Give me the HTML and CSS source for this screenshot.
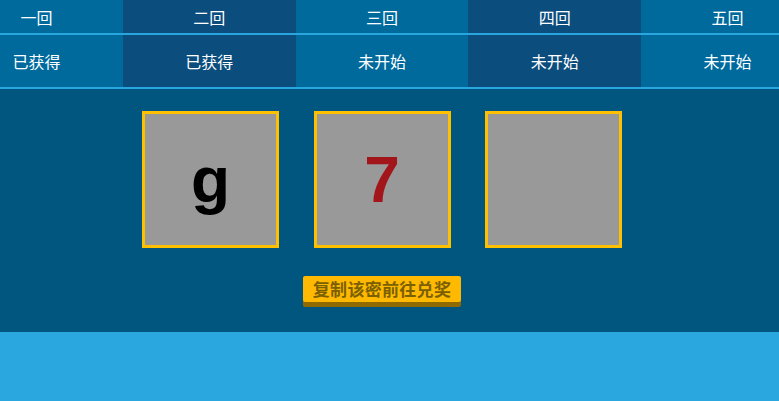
FILE: index.html
```html
<!DOCTYPE html>
<html lang="zh-CN">
<head>
<meta charset="utf-8">
<title>兑奖</title>
<link rel="stylesheet" href="styles.css">
</head>
<body>
<div class="page">
  <div class="rounds">
    <div class="row head">
      <div class="cell">一回</div>
      <div class="cell alt">二回</div>
      <div class="cell">三回</div>
      <div class="cell alt">四回</div>
      <div class="cell">五回</div>
    </div>
    <div class="row status">
      <div class="cell">已获得</div>
      <div class="cell alt">已获得</div>
      <div class="cell">未开始</div>
      <div class="cell alt">未开始</div>
      <div class="cell">未开始</div>
    </div>
  </div>
  <div class="main">
    <div class="inner">
      <div class="codes">
        <div class="code black">g</div>
        <div class="code red">7</div>
        <div class="code"></div>
      </div>
      <button class="copy">复制该密前往兑奖</button>
    </div>
  </div>
</div>
</body>
</html>
```

FILE: styles.css
```css
html, body {
  margin: 0;
  padding: 0;
}
body {
  background: #2ba7e0;
  font-family: "Liberation Sans", "Noto Sans CJK SC", sans-serif;
  overflow: hidden;
}
.page {
  width: 779px;
  overflow: hidden;
}
.rounds {
  width: 864px;
  margin-left: -50px;
  background: #006a9d;
}
.row {
  display: flex;
  border-bottom: 2px solid #2aa6de;
}
.cell {
  flex: 1 1 0;
  display: flex;
  align-items: center;
  justify-content: center;
  color: #ffffff;
  font-family: "Noto Sans CJK SC", sans-serif;
  font-size: 16px;
}
.cell.alt {
  background: #0b4d7d;
}
.head .cell {
  height: 33px;
}
.status .cell {
  height: 52px;
}
.main {
  background: #01567f;
}
.inner {
  width: 764px;
  display: flex;
  flex-direction: column;
  align-items: center;
  padding: 22px 0 25px;
}
.codes {
  display: flex;
  gap: 34.5px;
}
.code {
  width: 131px;
  height: 131px;
  border: 3px solid #ffc000;
  background: #999999;
  display: flex;
  align-items: center;
  justify-content: center;
  font-family: "Liberation Sans", sans-serif;
  font-weight: bold;
  font-size: 64px;
}
.code.black {
  color: #000000;
}
.code.red {
  color: #a2151a;
}
.copy {
  margin-top: 28px;
  margin-bottom: 5px;
  height: 26px;
  padding: 0 10px;
  border: none;
  border-radius: 2px;
  background: #ffb900;
  box-shadow: 0 5px 0 #8f6a00;
  color: #7a6000;
  font-family: "Noto Sans CJK SC", sans-serif;
  font-weight: bold;
  font-size: 17px;
  line-height: 26px;
  letter-spacing: 0.3px;
}
```
